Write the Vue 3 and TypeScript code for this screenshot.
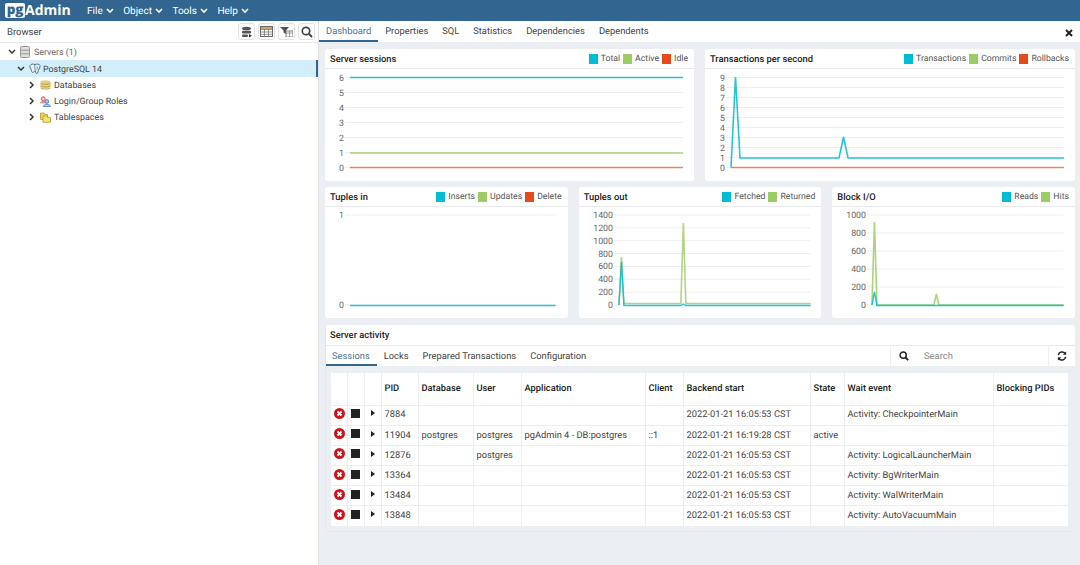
<script setup lang="ts">
interface Series { color: string; points: number[][]; op?: number; sw?: number }
interface Chart {
  title: string; x: number; y: number; w: number; h: number;
  legend: { label: string; color: string }[];
  ticks: { label: string; y: number }[];
  left: number; right: number; labelX: number; series: Series[];
}
const TEAL = '#00bcd4', GREEN = '#9ccc65', RED = '#e64a19';
const even = (labels: string[], top: number, bottom: number) =>
  labels.map((label, i) => ({ label, y: top + ((bottom - top) * i) / (labels.length - 1) }));

const topCharts: Chart[] = [
  { title: 'Server sessions', x: 325, y: 49, w: 369, h: 132, left: 350, right: 683, labelX: 344,
    legend: [{ label: 'Total', color: TEAL }, { label: 'Active', color: GREEN }, { label: 'Idle', color: RED }],
    ticks: even(['6', '5', '4', '3', '2', '1', '0'], 77.5, 167.5),
    series: [
      { color: RED, points: [[350, 167.5], [683, 167.5]], op: 0.65 },
      { color: GREEN, points: [[350, 153], [683, 153]] },
      { color: TEAL, points: [[350, 77.5], [683, 77.5]] },
    ] },
  { title: 'Transactions per second', x: 705, y: 49, w: 370, h: 132, left: 731, right: 1064, labelX: 725,
    legend: [{ label: 'Transactions', color: TEAL }, { label: 'Commits', color: GREEN }, { label: 'Rollbacks', color: RED }],
    ticks: even(['9', '8', '7', '6', '5', '4', '3', '2', '1', '0'], 77.5, 167.5),
    series: [
      { color: RED, points: [[731, 167.5], [1064, 167.5]], op: 0.65 },
      { color: TEAL, points: [[731, 167.5], [735.5, 77], [740, 158], [839, 158], [843.5, 137], [848, 158], [1064, 158]] },
    ] },
];
const bottomCharts: Chart[] = [
  { title: 'Tuples in', x: 325, y: 187, w: 243, h: 131, left: 350, right: 556, labelX: 344,
    legend: [{ label: 'Inserts', color: TEAL }, { label: 'Updates', color: GREEN }, { label: 'Delete', color: RED }],
    ticks: even(['1', '0'], 215, 305),
    series: [{ color: TEAL, points: [[350, 305.5], [556, 305.5]] }] },
  { title: 'Tuples out', x: 578, y: 187, w: 243, h: 131, left: 618, right: 810, labelX: 612,
    legend: [{ label: 'Fetched', color: TEAL }, { label: 'Returned', color: GREEN }],
    ticks: even(['1400', '1200', '1000', '800', '600', '400', '200', '0'], 215, 305),
    series: [
      { color: GREEN, points: [[618, 305], [620.5, 257], [623, 303.5], [680, 303.5], [682.5, 223], [685, 303.5], [810, 303.5]], op: 0.8 },
      { color: TEAL, points: [[618, 305], [620.5, 262], [623, 305.5], [680, 305.5], [682.5, 304], [685, 305.5], [810, 305.5]], sw: 1.4 },
    ] },
  { title: 'Block I/O', x: 832, y: 187, w: 243, h: 131, left: 872, right: 1064, labelX: 866,
    legend: [{ label: 'Reads', color: TEAL }, { label: 'Hits', color: GREEN }],
    ticks: even(['1000', '800', '600', '400', '200', '0'], 215, 305),
    series: [
      { color: GREEN, points: [[872, 305], [874.5, 222], [877, 305], [934, 305], [936.5, 294], [939, 305], [1064, 305]] },
      { color: TEAL, points: [[872, 305], [874.5, 292], [877, 305.5], [1064, 305.5]], sw: 1.4 },
    ] },
];
const pts = (p: number[][]) => p.map((q) => q.join(',')).join(' ');
const box = (c: Chart) => `${c.x} ${c.y + 20} ${c.w} ${c.h - 20}`;

const mainTabs = ['Dashboard', 'Properties', 'SQL', 'Statistics', 'Dependencies', 'Dependents'];
const subTabs = ['Sessions', 'Locks', 'Prepared Transactions', 'Configuration'];
const menus = ['File', 'Object', 'Tools', 'Help'];
const head = ['PID', 'Database', 'User', 'Application', 'Client', 'Backend start', 'State', 'Wait event', 'Blocking PIDs'];
const widths = [16.5, 16.5, 17, 37, 55, 48, 124, 38, 127, 34, 149, 75];
const rows = [
  ['7884', '', '', '', '', '2022-01-21 16:05:53 CST', '', 'Activity: CheckpointerMain', ''],
  ['11904', 'postgres', 'postgres', 'pgAdmin 4 - DB:postgres', '::1', '2022-01-21 16:19:28 CST', 'active', '', ''],
  ['12876', '', 'postgres', '', '', '2022-01-21 16:05:53 CST', '', 'Activity: LogicalLauncherMain', ''],
  ['13364', '', '', '', '', '2022-01-21 16:05:53 CST', '', 'Activity: BgWriterMain', ''],
  ['13484', '', '', '', '', '2022-01-21 16:05:53 CST', '', 'Activity: WalWriterMain', ''],
  ['13848', '', '', '', '', '2022-01-21 16:05:53 CST', '', 'Activity: AutoVacuumMain', ''],
];
</script>

<template>
  <div class="app">
    <header class="nav">
      <div class="logo"><span class="pg">pg</span><span class="admin">Admin</span></div>
      <div v-for="m in menus" :key="m" class="menu">
        {{ m }}
        <svg width="8" height="6" viewBox="0 0 8 6"><path d="M1 1l3 3 3-3" fill="none" stroke="#fff" stroke-width="1.6" /></svg>
      </div>
    </header>
    <div class="body">
      <aside class="side">
        <div class="side-top">
          <span class="browser">Browser</span>
          <div class="tools">
            <button class="tool">
              <svg width="12" height="12" viewBox="0 0 12 12"><ellipse cx="5.5" cy="2.5" rx="4.5" ry="1.8" fill="#555" /><rect x="1" y="4.8" width="9" height="2.6" rx="1" fill="#555" /><rect x="1" y="8.4" width="6" height="2.6" rx="1" fill="#555" /><path d="M8 8l3 1.8L8 11.5z" fill="#333" /></svg>
            </button>
            <button class="tool">
              <svg width="13" height="11" viewBox="0 0 13 11"><rect x=".5" y=".5" width="12" height="10" fill="#fff" stroke="#666" /><path d="M.5 3.5h12M.5 6h12M.5 8.3h12M4.5.5v10M8.5.5v10" stroke="#777" stroke-width=".8" /><rect x="1" y="1" width="11" height="2" fill="#c9a86a" /></svg>
            </button>
            <button class="tool">
              <svg width="13" height="11" viewBox="0 0 13 11"><path d="M0 1h9L6 4.5V8L3.5 6.5v-2z" fill="#555" /><rect x="6" y="5" width="7" height="6" fill="#fff" stroke="#666" stroke-width=".8" /><path d="M6 7h7M9.5 5v6" stroke="#777" stroke-width=".7" /></svg>
            </button>
            <button class="tool">
              <svg width="12" height="12" viewBox="0 0 12 12"><circle cx="5" cy="5" r="3.7" fill="none" stroke="#444" stroke-width="1.7" /><path d="M7.8 7.8L11 11" stroke="#444" stroke-width="2" /></svg>
            </button>
          </div>
        </div>
        <div class="tree">
          <div class="node lv0">
            <svg class="chev" width="8" height="6" viewBox="0 0 8 6"><path d="M1 1l3 3 3-3" fill="none" stroke="#333" stroke-width="1.5" /></svg>
            <svg class="ico" width="10" height="12" viewBox="0 0 10 12"><rect x=".5" y=".5" width="9" height="11" rx="1" fill="#ddd" stroke="#999" /><path d="M.5 4.2h9M.5 7.8h9" stroke="#999" /></svg>
            <span class="muted">Servers (1)</span>
          </div>
          <div class="node lv1 selected">
            <svg class="chev" width="8" height="6" viewBox="0 0 8 6"><path d="M1 1l3 3 3-3" fill="none" stroke="#333" stroke-width="1.5" /></svg>
            <svg class="ico" width="12" height="12" viewBox="0 0 12 12"><path d="M1 2.5C2 .5 5 1 6 1.6 7.5.8 10.5.8 11 2.5c.4 1.7-1 3.5-1.6 4.7-.4 1-.2 3-1.4 3.3C6.8 10.8 6.6 9 6.4 8 5 8.2 4.4 9.8 3.4 9.3 2 8.6 2.6 6.8 2 6 1.3 4.8.6 3.6 1 2.5z" fill="#e8f2f8" stroke="#336791" stroke-width=".9" /><path d="M6 1.6C5.3 4 6 6 6.4 8M8 3.5c.6 1 .4 2-.2 3" fill="none" stroke="#336791" stroke-width=".7" /></svg>
            <span>PostgreSQL 14</span>
          </div>
          <div class="node lv2">
            <svg class="chev side-chev" width="6" height="8" viewBox="0 0 6 8"><path d="M1 1l3 3-3 3" fill="none" stroke="#333" stroke-width="1.5" /></svg>
            <svg class="ico" width="11" height="10" viewBox="0 0 11 10"><rect x=".5" y="1" width="10" height="8.5" rx="2.5" fill="#c9ad55" /><ellipse cx="5.5" cy="2" rx="5" ry="1.7" fill="#e3cf86" /><path d="M.5 4.7c2.5 1.3 7.5 1.3 10 0M.5 7.2c2.5 1.3 7.5 1.3 10 0" fill="none" stroke="#f1e7bd" stroke-width=".8" /></svg>
            <span>Databases</span>
          </div>
          <div class="node lv2">
            <svg class="chev side-chev" width="6" height="8" viewBox="0 0 6 8"><path d="M1 1l3 3-3 3" fill="none" stroke="#333" stroke-width="1.5" /></svg>
            <svg class="ico" width="11" height="11" viewBox="0 0 12 12"><circle cx="3.5" cy="3" r="2.2" fill="#f6d5d5" stroke="#d0555a" /><path d="M.5 7.5c.3-2 5.7-2 6 0z" fill="#f6d5d5" stroke="#d0555a" stroke-width=".8" /><circle cx="7.5" cy="6" r="2" fill="#a9cdf0" stroke="#3f75b8" /><path d="M3.5 11.5c.3-3.2 7.7-3.2 8 0z" fill="#a9cdf0" stroke="#3f75b8" stroke-width=".8" /></svg>
            <span>Login/Group Roles</span>
          </div>
          <div class="node lv2">
            <svg class="chev side-chev" width="6" height="8" viewBox="0 0 6 8"><path d="M1 1l3 3-3 3" fill="none" stroke="#333" stroke-width="1.5" /></svg>
            <svg class="ico" width="11" height="11" viewBox="0 0 11 11"><path d="M.5 1h3.5l1 1.5h2.5V7.5H.5z" fill="#f2d54e" stroke="#b79b2a" stroke-width=".8" /><path d="M3 4h3.5l1 1.3h3v5H3z" fill="#f7e36f" stroke="#b79b2a" stroke-width=".8" /></svg>
            <span>Tablespaces</span>
          </div>
        </div>
      </aside>

      <main class="main">
        <div class="tabs">
          <span v-for="(t, i) in mainTabs" :key="t" class="tab" :class="{ on: i === 0 }">{{ t }}</span>
          <svg class="close" width="8" height="8" viewBox="0 0 8 8"><path d="M1 1l6 6M7 1L1 7" stroke="#222" stroke-width="2" /></svg>
        </div>
        <div class="dash">
          <div class="row two">
            <section v-for="c in topCharts" :key="c.title" class="card">
              <div class="card-head">
                <strong>{{ c.title }}</strong>
                <div class="legend">
                  <span v-for="l in c.legend" :key="l.label" class="leg"><i :style="{ background: l.color }"></i>{{ l.label }}</span>
                </div>
              </div>
              <svg class="plot" :viewBox="box(c)" preserveAspectRatio="none">
                <g v-for="t in c.ticks" :key="t.label">
                  <line :x1="c.labelX + 1" :x2="c.right" :y1="t.y" :y2="t.y" stroke="#eceef1" />
                  <text :x="c.labelX" :y="t.y + 3" text-anchor="end" class="tick">{{ t.label }}</text>
                </g>
                <polyline v-for="(s, i) in c.series" :key="i" :points="pts(s.points)" fill="none" :stroke="s.color" :stroke-width="s.sw ?? 1.6" :stroke-opacity="s.op ?? 0.85" />
              </svg>
            </section>
          </div>
          <div class="row three">
            <section v-for="c in bottomCharts" :key="c.title" class="card">
              <div class="card-head">
                <strong>{{ c.title }}</strong>
                <div class="legend">
                  <span v-for="l in c.legend" :key="l.label" class="leg"><i :style="{ background: l.color }"></i>{{ l.label }}</span>
                </div>
              </div>
              <svg class="plot" :viewBox="box(c)" preserveAspectRatio="none">
                <g v-for="t in c.ticks" :key="t.label">
                  <line :x1="c.labelX + 1" :x2="c.right" :y1="t.y" :y2="t.y" stroke="#eceef1" />
                  <text :x="c.labelX" :y="t.y + 3" text-anchor="end" class="tick">{{ t.label }}</text>
                </g>
                <polyline v-for="(s, i) in c.series" :key="i" :points="pts(s.points)" fill="none" :stroke="s.color" :stroke-width="s.sw ?? 1.6" :stroke-opacity="s.op ?? 0.85" />
              </svg>
            </section>
          </div>
          <section class="card activity">
            <div class="card-head"><strong>Server activity</strong></div>
            <div class="sub">
              <span v-for="(t, i) in subTabs" :key="t" class="tab" :class="{ on: i === 0 }">{{ t }}</span>
              <div class="search">
                <svg width="10" height="10" viewBox="0 0 12 12"><circle cx="5" cy="5" r="3.7" fill="none" stroke="#222" stroke-width="1.8" /><path d="M7.8 7.8L11 11" stroke="#222" stroke-width="2.2" /></svg>
                <span>Search</span>
              </div>
              <div class="refresh">
                <svg width="10" height="10" viewBox="0 0 12 12"><path d="M1.5 5A4.6 4.6 0 0 1 9.7 3M10.5 7A4.6 4.6 0 0 1 2.3 9" fill="none" stroke="#222" stroke-width="1.8" /><path d="M11 .5v4H7zM1 11.5v-4h4z" fill="#222" /></svg>
              </div>
            </div>
            <div class="table-wrap">
              <table>
                <colgroup><col v-for="(w, i) in widths" :key="i" :style="{ width: w + 'px' }" /></colgroup>
                <thead>
                  <tr><th></th><th></th><th></th><th v-for="h in head" :key="h">{{ h }}</th></tr>
                </thead>
                <tbody>
                  <tr v-for="r in rows" :key="r[0]">
                    <td class="c">
                      <svg width="11" height="11" viewBox="0 0 11 11"><circle cx="5.5" cy="5.5" r="5.5" fill="#d0121b" /><path d="M3.5 3.5l4 4M7.5 3.5l-4 4" stroke="#fff" stroke-width="1.8" /></svg>
                    </td>
                    <td class="c"><svg width="9" height="9" viewBox="0 0 9 9"><rect width="9" height="9" fill="#222" /></svg></td>
                    <td class="c"><svg width="4" height="6" viewBox="0 0 4 6"><path d="M0 0l4 3-4 3z" fill="#222" /></svg></td>
                    <td v-for="(v, i) in r" :key="i">{{ v }}</td>
                  </tr>
                </tbody>
              </table>
            </div>
          </section>
        </div>
      </main>
    </div>
  </div>
</template>

<style>
html, body { margin: 0; overflow: hidden; background: #fff; }
</style>

<style scoped>
.app { width: 1080px; height: 565px; display: flex; flex-direction: column; font-family: Roboto, "Liberation Sans", sans-serif; font-size: 9.4px; color: #333; overflow: hidden; text-rendering: geometricPrecision; }
.nav { height: 21px; background: #326690; display: flex; align-items: center; color: #fff; padding-left: 5px; box-sizing: border-box; flex: none; }
.logo { display: flex; align-items: center; width: 82px; }
.pg { background: #fff; color: #326690; font: 800 13.5px/13px "Open Sans", sans-serif; width: 20px; height: 15px; text-align: center; border-radius: 2px; letter-spacing: -.3px; }
.admin { font: 700 14px/14px "Open Sans", sans-serif; color: #fff; }
.menu { font-size: 10px; display: flex; align-items: center; gap: 3px; margin-right: 9.5px; padding-top: 1px; }
.body { flex: 1; display: flex; min-height: 0; }
.side { width: 319px; flex: none; border-right: 1px solid #dde0e6; box-sizing: border-box; display: flex; flex-direction: column; }
.side-top { height: 22px; display: flex; align-items: center; justify-content: space-between; padding: 0 3px 0 7px; border-bottom: 1px solid #e6e8ec; flex: none; box-sizing: border-box; }
.browser { font-size: 9.5px; color: #444; padding-top: 2px; }
.tools { display: flex; gap: 3px; }
.tool { width: 17px; height: 17px; padding: 0; border: 1px solid #dfe2e7; border-radius: 3px; background: #fff; display: flex; align-items: center; justify-content: center; }
.tree { padding-top: 1px; }
.node { height: 16px; display: flex; align-items: center; font-size: 8.9px; color: #444; position: relative; }
.node span { padding-top: 2px; }
.node.selected { height: 17px; background: #d2eefb; border-right: 2px solid #326690; box-sizing: border-box; }
.lv0 { padding-left: 8px; }
.lv1 { padding-left: 17px; }
.lv2 { padding-left: 29px; }
.ico { margin: 0 3px 0 4px; flex: none; }
.lv0 .ico { margin-right: 4px; }
.lv1 .ico { margin-right: 2px; }
.side-chev { margin-right: 1px; }
.muted { color: #666; }
.main { flex: 1; background: #ebeef3; display: flex; flex-direction: column; min-width: 0; }
.tabs { height: 21px; background: #fff; display: flex; align-items: stretch; position: relative; flex: none; }
.tab { padding: 1px 7px 0; line-height: 20px; color: #444; font-size: 9.35px; box-sizing: border-box; }
.tab.on { color: #4a7396; border-bottom: 2px solid #326690; }
.close { position: absolute; right: 7px; top: 8px; }
.dash { padding: 7px 5px 0 6px; display: flex; flex-direction: column; gap: 6px; }
.row { display: grid; column-gap: 11px; }
.row.two { grid-template-columns: 369px 370px; height: 132px; }
.row.three { grid-template-columns: repeat(3, 1fr); height: 131px; }
.card { background: #fff; border-radius: 3px; display: flex; flex-direction: column; min-width: 0; overflow: hidden; }
.card-head { height: 20px; flex: none; border-bottom: 1px solid #e8eaee; display: flex; align-items: center; justify-content: space-between; padding: 1px 6px 0 5px; box-sizing: border-box; }
.card-head strong { font-weight: 500; font-size: 9.35px; color: #222; }
.legend { display: flex; gap: 3px; }
.leg { display: flex; align-items: center; gap: 3px; font-size: 8.7px; color: #555; }
.leg i { width: 9px; height: 10px; display: block; }
.plot { flex: 1; width: 100%; min-height: 0; display: block; }
.tick { font: 8.8px Roboto, sans-serif; fill: #666; }
.activity { height: 207px; margin-top: 1px; border: 1px solid #e4e7ec; border-top: 0; border-right: 0; box-sizing: border-box; }
.activity .card-head { height: 21px; padding-left: 4px; padding-top: 0; }
.sub { height: 21px; display: flex; align-items: stretch; flex: none; border-bottom: 1px solid #ebeef3; box-sizing: border-box; }
.activity .tab { padding: 1px 7px 0; }
.activity .tab:first-child { padding-left: 6px; }
.search { margin-left: auto; width: 158px; border-left: 1px solid #ebeef3; display: flex; align-items: center; gap: 15px; padding-left: 8px; box-sizing: border-box; color: #888; }
.refresh { width: 27px; border-left: 1px solid #ebeef3; display: flex; align-items: center; justify-content: center; box-sizing: border-box; }
.table-wrap { flex: 1; background: #ebeef3; padding: 6px 6px 6px 5px; box-sizing: border-box; min-height: 0; }
table { width: 737px; table-layout: fixed; border-collapse: collapse; background: #fff; font-size: 9.3px; }
th { height: 32px; font-weight: 500; text-align: left; padding: 0 3px; color: #222; border: 1px solid #ebeef3; border-top: 0; box-sizing: border-box; overflow: hidden; white-space: nowrap; }
td { height: 20.2px; padding: 0 3px; color: #444; border: 1px solid #ebeef3; box-sizing: border-box; white-space: nowrap; overflow: hidden; line-height: 1; }
th:first-child, td:first-child { border-left: 0; }
th:last-child, td:last-child { border-right: 0; }
td.c { padding: 0; text-align: center; }
td.c svg { display: inline-block; vertical-align: 1px; }
</style>
